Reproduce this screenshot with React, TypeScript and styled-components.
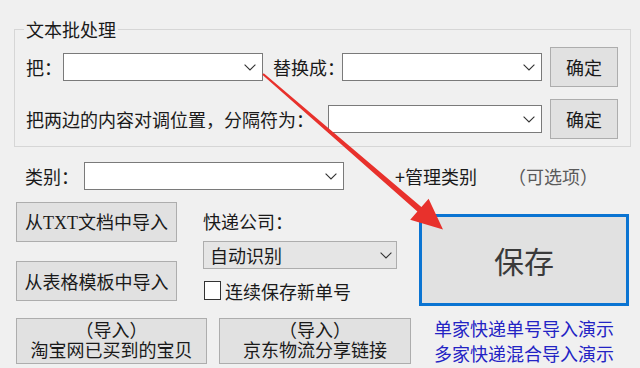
import styled, { createGlobalStyle } from 'styled-components';

const GlobalStyle = createGlobalStyle`
  body {
    margin: 0;
    background: #f0f0f0;
    font-family: "Noto Sans CJK SC", "Noto Sans", sans-serif;
    font-size: 18px;
    color: #1a1a1a;
  }
`;

const Window = styled.div`
  position: relative;
  width: 640px;
  height: 368px;
  overflow: hidden;
  box-sizing: border-box;
  padding: 19px 9px 0 14px;
`;

const GroupBox = styled.fieldset`
  margin: 0;
  border: 1px solid #d6d6d6;
  padding: 8px 0 7px 11px;
`;

const Legend = styled.legend`
  padding: 0 2px;
  margin-left: -2px;
  line-height: 20px;
`;

const Row = styled.div`
  display: flex;
  align-items: center;
  & + & {
    margin-top: 12px;
  }
`;

const Label = styled.span<{ $w?: number; $ml?: number; $muted?: boolean }>`
  flex: none;
  width: ${(p) => (p.$w ? `${p.$w}px` : 'auto')};
  margin-left: ${(p) => p.$ml ?? 0}px;
  white-space: nowrap;
  line-height: 24px;
  color: ${(p) => (p.$muted ? '#5a5a5a' : 'inherit')};
`;

const ComboBox = styled.div<{ $w: number; $flat?: boolean }>`
  flex: none;
  display: flex;
  align-items: center;
  justify-content: space-between;
  box-sizing: border-box;
  width: ${(p) => p.$w}px;
  height: 28px;
  padding: ${(p) => (p.$flat ? '0 4px 0 6px' : '0 6px')};
  border: 1px solid ${(p) => (p.$flat ? '#adadad' : '#7a7a7a')};
  background: ${(p) => (p.$flat ? '#e5e5e5' : '#fff')};
  line-height: 24px;
`;

const Button = styled.button<{ $w: number; $h: number; $ml?: number }>`
  flex: none;
  width: ${(p) => p.$w}px;
  height: ${(p) => p.$h}px;
  margin: 0 0 0 ${(p) => p.$ml ?? 0}px;
  padding: 0;
  border: 1px solid #adadad;
  background: #e1e1e1;
  font: inherit;
  color: #1a1a1a;
  line-height: 20px;
  white-space: nowrap;
`;

/* two stacked lines inside one button; Latin primary font keeps the line boxes tight */
const ButtonLine = styled.span`
  display: block;
  font-family: "Liberation Sans", "Noto Sans CJK SC", sans-serif;
  line-height: 20px;
`;

const Latin = styled.span`
  font-family: "Liberation Serif", serif;
`;

const Main = styled.div`
  display: flex;
  margin-top: 12px;
  padding-left: 2px;
`;

const LeftArea = styled.div`
  width: 395px;
  display: flex;
  flex-direction: column;
`;

const UpperRow = styled.div`
  display: flex;
  gap: 26px;
`;

const ButtonColumn = styled.div`
  display: flex;
  flex-direction: column;
  gap: 19px;
`;

const CourierColumn = styled.div`
  width: 194px;
  padding-top: 7px;
  display: flex;
  flex-direction: column;
`;

const SelectWrap = styled.div`
  margin-top: 8px;
`;

const CheckRow = styled.label`
  display: flex;
  align-items: center;
  margin-top: 11px;
  height: 21px;
  padding-left: 1px;
  white-space: nowrap;
`;

const CheckBox = styled.span`
  flex: none;
  width: 17px;
  height: 19px;
  box-sizing: border-box;
  border: 1px solid #333;
  background: #fff;
  margin-right: 4px;
`;

const BottomRow = styled.div`
  display: flex;
  gap: 12px;
  margin-top: 17px;
`;

const RightArea = styled.div`
  width: 210px;
  margin-left: 8px;
  display: flex;
  flex-direction: column;
  align-items: center;
`;

const SaveButton = styled.button`
  width: 210px;
  height: 92px;
  margin: 12px 0 0;
  padding: 0;
  box-sizing: border-box;
  border: 3px solid #0a74d2;
  background: #e1e1e1;
  font-family: inherit;
  font-size: 30px;
  color: #3a3a3a;
`;

const Links = styled.div`
  margin-top: 10px;
  display: flex;
  flex-direction: column;
  align-items: center;
  line-height: 25px;
`;

const DemoLink = styled.a`
  color: #2323c4;
  text-decoration: none;
`;

const ArrowLayer = styled.svg`
  position: absolute;
  left: 0;
  top: 0;
  pointer-events: none;
`;

function Chevron() {
  return (
    <svg width="12" height="7" viewBox="0 0 12 7">
      <path d="M0.6 0.6 L6 6 L11.4 0.6" fill="none" stroke="#333" strokeWidth="1.1" />
    </svg>
  );
}

function Combo({ w, flat, children }: { w: number; flat?: boolean; children?: React.ReactNode }) {
  return (
    <ComboBox $w={w} $flat={flat}>
      <span>{children}</span>
      <Chevron />
    </ComboBox>
  );
}

export default function App() {
  return (
    <Window>
      <GlobalStyle />
      <GroupBox>
        <Legend>文本批处理</Legend>
        <Row>
          <Label $w={37}>把：</Label>
          <Combo w={200} />
          <Label $w={69} $ml={10}>替换成：</Label>
          <Combo w={200} />
          <Button $w={68} $h={40} $ml={8}>确定</Button>
        </Row>
        <Row>
          <Label $w={302}>把两边的内容对调位置，分隔符为：</Label>
          <Combo w={214} />
          <Button $w={68} $h={40} $ml={8}>确定</Button>
        </Row>
      </GroupBox>

      <Row style={{ marginTop: 15 }}>
        <Label $w={59} $ml={11}>类别：</Label>
        <Combo w={260} />
        <Label $ml={51}>+管理类别</Label>
        <Label $ml={31} $muted>（可选项）</Label>
      </Row>

      <Main>
        <LeftArea>
          <UpperRow>
            <ButtonColumn>
              <Button $w={161} $h={40}>
                从<Latin>TXT</Latin>文档中导入
              </Button>
              <Button $w={161} $h={40}>从表格模板中导入</Button>
            </ButtonColumn>
            <CourierColumn>
              <Label>快递公司：</Label>
              <SelectWrap>
                <Combo w={194} flat>自动识别</Combo>
              </SelectWrap>
              <CheckRow>
                <CheckBox />
                连续保存新单号
              </CheckRow>
            </CourierColumn>
          </UpperRow>
          <BottomRow>
            <Button $w={191} $h={46}>
              <ButtonLine>（导入）</ButtonLine>
              <ButtonLine>淘宝网已买到的宝贝</ButtonLine>
            </Button>
            <Button $w={192} $h={46}>
              <ButtonLine>（导入）</ButtonLine>
              <ButtonLine>京东物流分享链接</ButtonLine>
            </Button>
          </BottomRow>
        </LeftArea>
        <RightArea>
          <SaveButton>保存</SaveButton>
          <Links>
            <DemoLink href="#">单家快递单号导入演示</DemoLink>
            <DemoLink href="#">多家快递混合导入演示</DemoLink>
          </Links>
        </RightArea>
      </Main>

      <ArrowLayer width="640" height="368" viewBox="0 0 640 368">
        <polygon
          points="263.7,73.2 421.4,207 428.6,198.8 443,229.5 410.2,219.8 417.4,211.6 262.3,74.8"
          fill="#e8312c"
        />
      </ArrowLayer>
    </Window>
  );
}
